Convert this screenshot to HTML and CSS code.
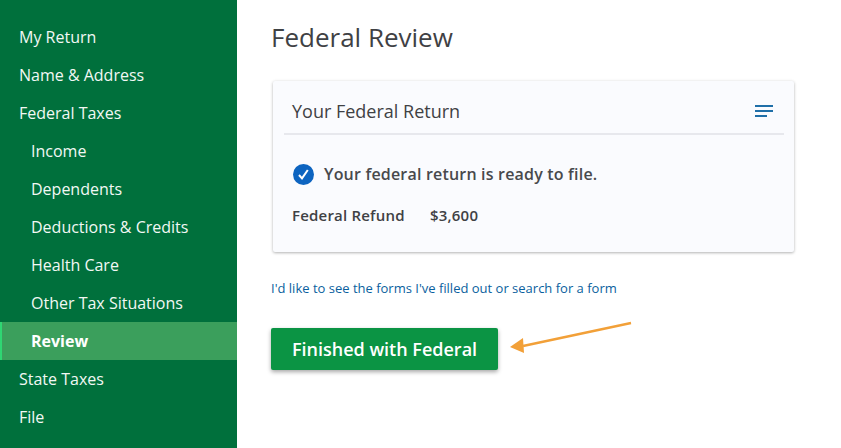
FILE: index.html
```html
<!DOCTYPE html>
<html lang="en">
<head>
    <meta charset="UTF-8">
    <meta name="viewport" content="width=device-width, initial-scale=1.0">
    <link rel="stylesheet" href="styles.css">
    <title>Federal Review</title>
</head>
<body>
    <nav class="sidebar">
        <a class="nav-item">My Return</a>
        <a class="nav-item">Name &amp; Address</a>
        <a class="nav-item">Federal Taxes</a>
        <a class="nav-item sub">Income</a>
        <a class="nav-item sub">Dependents</a>
        <a class="nav-item sub">Deductions &amp; Credits</a>
        <a class="nav-item sub">Health Care</a>
        <a class="nav-item sub">Other Tax Situations</a>
        <a class="nav-item sub active">Review</a>
        <a class="nav-item">State Taxes</a>
        <a class="nav-item">File</a>
    </nav>

    <main class="main">
        <h1 class="title">Federal Review</h1>

        <section class="card">
            <div class="card-head">
                <h2 class="card-title">Your Federal Return</h2>
                <svg class="menu-icon" width="18" height="14" viewBox="0 0 18 14">
                    <path d="M0 2H18M0 7H18M0 12H12" stroke="#1f6fa8" stroke-width="1.8" fill="none"/>
                </svg>
            </div>
            <div class="card-body">
                <p class="status">
                    <svg class="check-icon" width="21" height="21" viewBox="0 0 21 21">
                        <circle cx="10.5" cy="10.5" r="10.5" fill="#0d64c0"/>
                        <path d="M6 11L9 14.4L14.8 6" stroke="#fff" stroke-width="2" fill="none"/>
                    </svg>
                    Your federal return is ready to file.
                </p>
                <p class="refund"><span class="refund-label">Federal Refund</span><span>$3,600</span></p>
            </div>
        </section>

        <a class="forms-link">I'd like to see the forms I've filled out or search for a form</a>

        <button class="finish-btn">Finished with Federal</button>
    </main>

    <svg class="arrow" width="126" height="36" viewBox="0 0 126 36">
        <path d="M122 3L14 26" stroke="#f2a038" stroke-width="2.4" fill="none"/>
        <path d="M1 27L14 18L15 33Z" fill="#f2a038"/>
    </svg>
</body>
</html>
```

FILE: styles.css
```css
body {
    font-family: "Open Sans", "Noto Sans", sans-serif;
    margin: 0;
    height: 448px;
    display: flex;
    overflow: hidden;
    background-color: #fff;
    color: #393a3d;
}

.sidebar {
    width: 237px;
    flex-shrink: 0;
    padding-top: 18px;
    box-sizing: border-box;
    background-color: #00703c;
}

.nav-item {
    display: flex;
    align-items: center;
    height: 38px;
    padding-left: 19px;
    font-size: 16px;
    font-weight: 400;
    color: #f2f8f4;
}

.sub {
    padding-left: 31px;
}

.active {
    padding-left: 29px;
    border-left: 2px solid #2fd673;
    background-color: #3b9f5c;
    font-weight: 700;
    color: #fff;
}

.main {
    flex: 1;
    padding-left: 34px;
}

.title {
    margin: 0;
    padding-top: 19px;
    font-size: 26px;
    line-height: 36px;
    font-weight: 400;
    color: #3f4144;
}

.card {
    width: 521px;
    height: 171px;
    margin: 26px 0 0 2px;
    padding: 0 10px 0 11px;
    box-sizing: border-box;
    border-radius: 2px;
    background-color: #fafbfe;
    box-shadow: 0 1px 3px rgba(0, 0, 0, 0.28), 0 0 4px rgba(0, 0, 0, 0.04);
}

.card-head {
    display: flex;
    align-items: center;
    justify-content: space-between;
    height: 45px;
    padding: 7px 11px 0 8px;
    border-bottom: 2px solid #e7e8ed;
}

.card-title {
    margin: 0;
    font-size: 18px;
    font-weight: 400;
    color: #3f4144;
}

.card-body {
    padding: 27px 8px 0;
}

.status {
    display: flex;
    align-items: center;
    gap: 10px;
    margin: 0;
    height: 24px;
    font-size: 16px;
    font-weight: 600;
    letter-spacing: 0.19px;
    color: #48494c;
}

.check-icon {
    margin-left: 1px;
    margin-top: 1px;
}

.refund {
    display: flex;
    margin: 19px 0 0;
    font-size: 15px;
    line-height: 20px;
    font-weight: 600;
    letter-spacing: 0.2px;
    color: #3f4144;
}

.refund-label {
    width: 138px;
}

.forms-link {
    display: block;
    margin-top: 27px;
    font-size: 13px;
    line-height: 18px;
    color: #0a5f9e;
}

.finish-btn {
    display: block;
    width: 227px;
    height: 42px;
    margin-top: 31px;
    padding: 0;
    border: none;
    border-radius: 2px;
    background-color: #0b9444;
    box-shadow: 0 2px 4px rgba(0, 0, 0, 0.35);
    font-family: inherit;
    font-size: 18px;
    font-weight: 600;
    color: #fff;
}

.arrow {
    position: absolute;
    left: 509px;
    top: 320px;
}
```
